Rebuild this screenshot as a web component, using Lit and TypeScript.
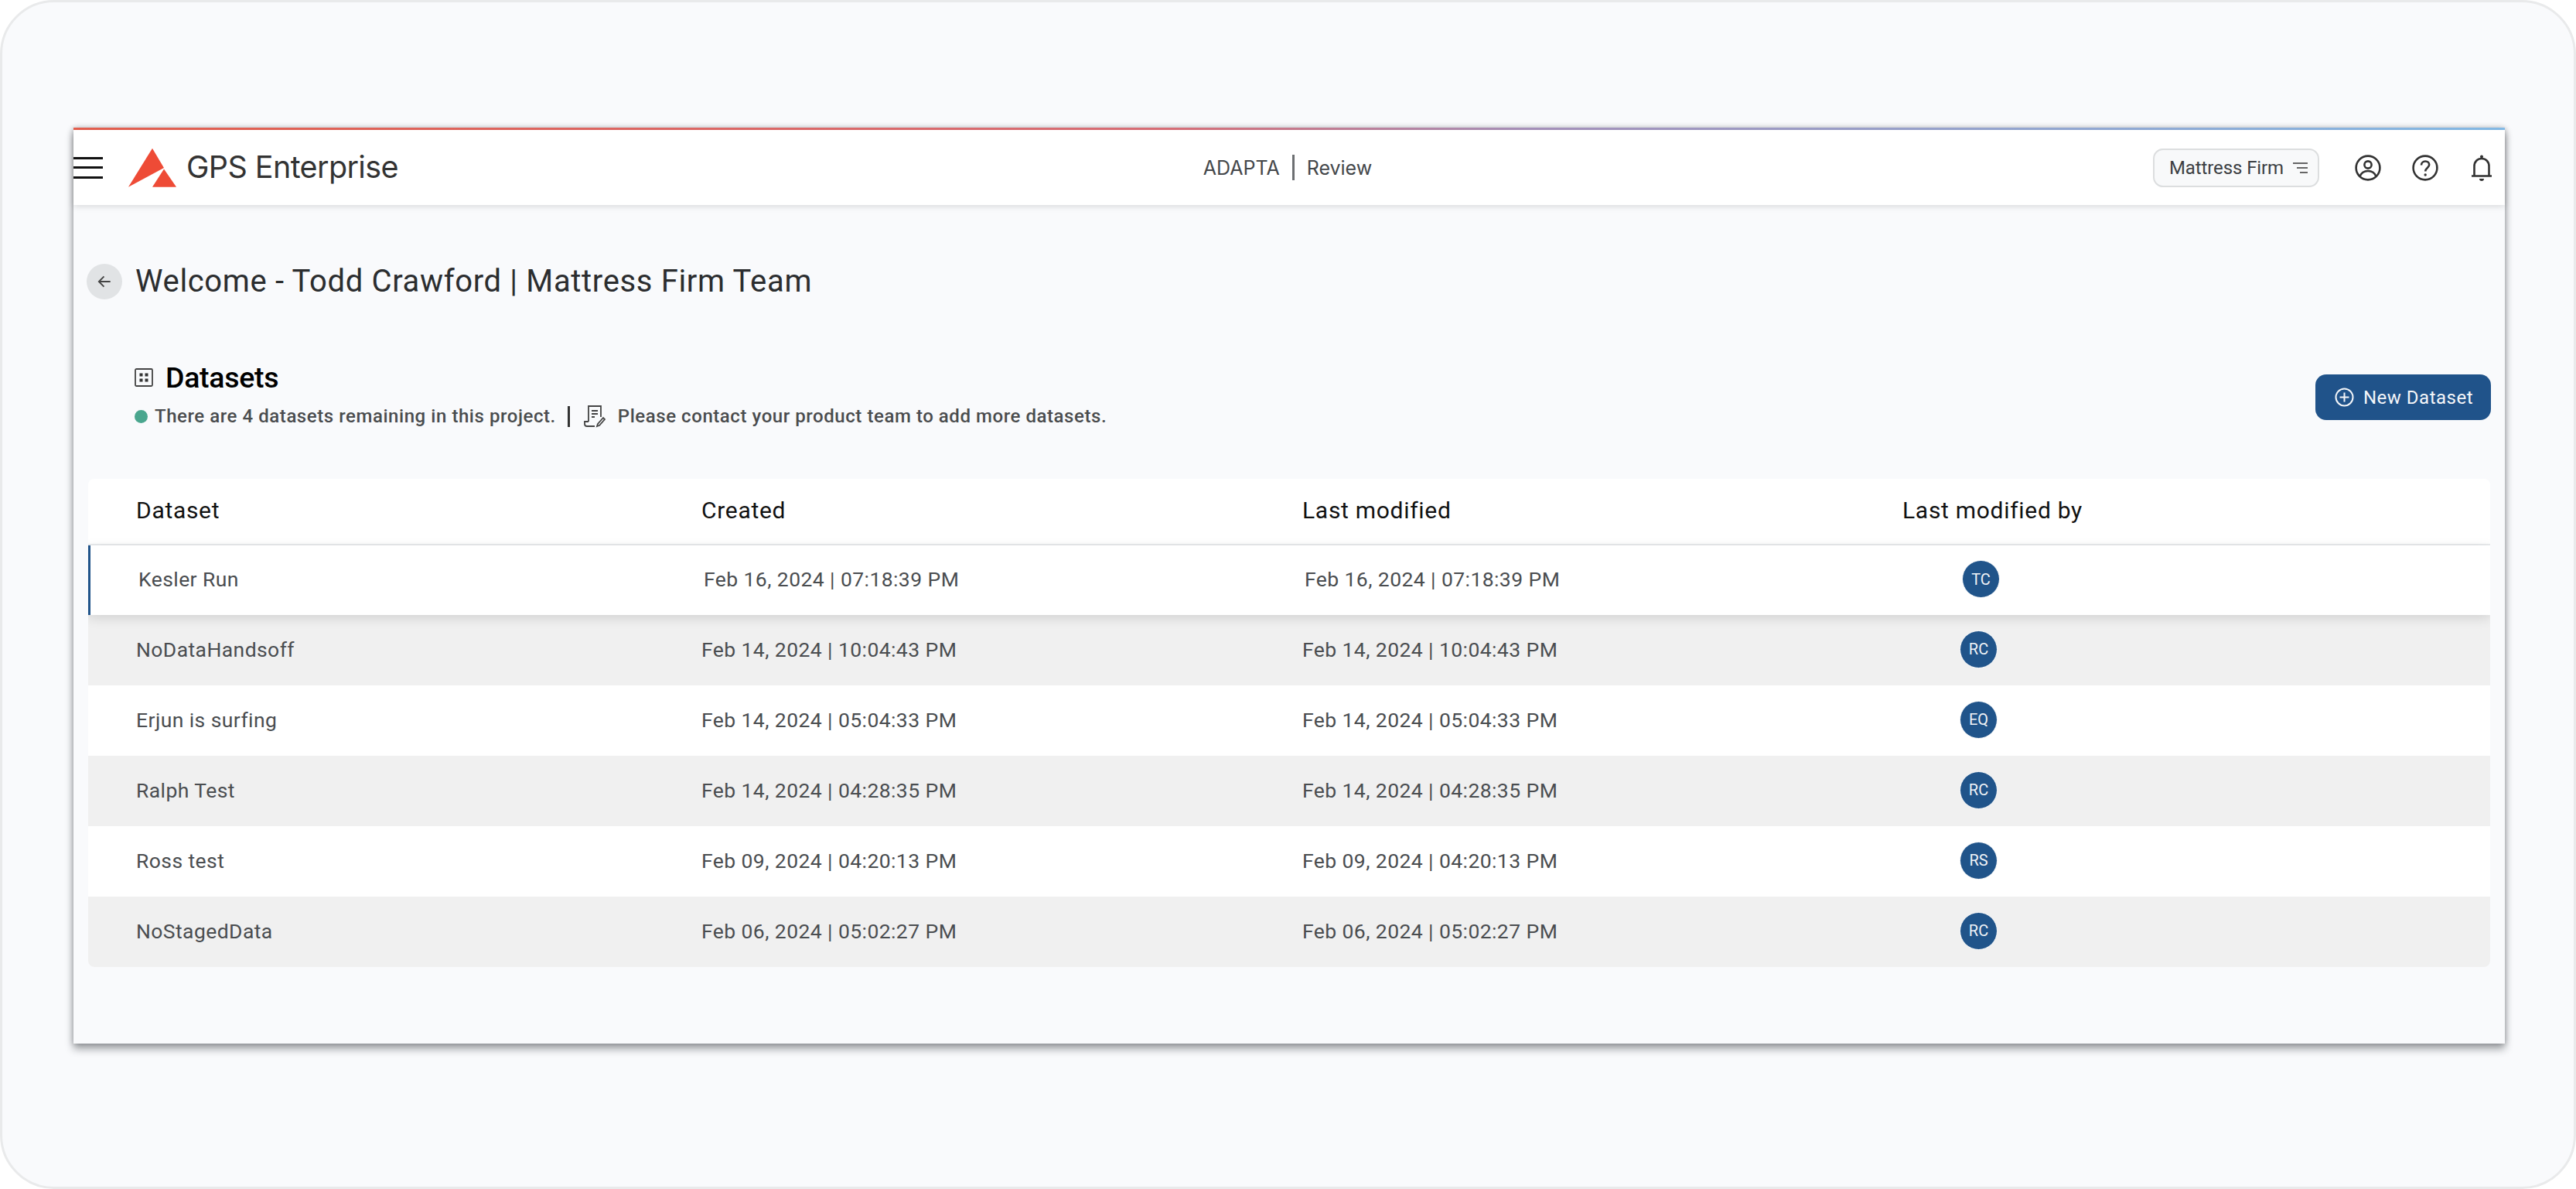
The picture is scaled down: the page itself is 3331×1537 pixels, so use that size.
import { LitElement, html, css } from "lit";
import { customElement } from "lit/decorators.js";

const rows = [
  { name: "Kesler Run", created: "Feb 16, 2024 | 07:18:39 PM", who: "TC" },
  { name: "NoDataHandsoff", created: "Feb 14, 2024 | 10:04:43 PM", who: "RC" },
  { name: "Erjun is surfing", created: "Feb 14, 2024 | 05:04:33 PM", who: "EQ" },
  { name: "Ralph Test", created: "Feb 14, 2024 | 04:28:35 PM", who: "RC" },
  { name: "Ross test", created: "Feb 09, 2024 | 04:20:13 PM", who: "RS" },
  { name: "NoStagedData", created: "Feb 06, 2024 | 05:02:27 PM", who: "RC" },
];

@customElement("app-root")
export class AppRoot extends LitElement {
  static styles = css`
    :host { display: block; font-family: Roboto, "Liberation Sans", sans-serif; background: #fff; }
    * { box-sizing: border-box; }
    .frame {
      height: 1537px; padding: 162px 89px 0 92px; background: #f9fafc;
      border: 3px solid #e9eaeb; border-radius: 70px; overflow: hidden;
    }
    .win {
      height: 1184px; background: #f9fafc; display: flex; flex-direction: column;
      box-shadow: 0 7px 10px rgba(30,34,40,.4), 2px 0 7px rgba(40,44,50,.14), -2px 0 7px rgba(40,44,50,.14);
    }
    .topline { height: 3px; flex: none; background: linear-gradient(90deg, #e8604f 0%, #dc6f78 45%, #a893bd 60%, #86bdea 100%); }
    .bar {
      height: 97px; flex: none; background: #fff; display: grid; grid-template-columns: 1fr 1fr 1fr; align-items: center;
      box-shadow: 0 2px 8px rgba(0,0,0,.13); position: relative;
    }
    .bar-l, .bar-r { display: flex; align-items: center; }
    .burger { width: 38px; height: 28px; display: flex; flex-direction: column; justify-content: space-between; margin-right: 33px; }
    .burger i { display: block; height: 3px; background: #111; }
    .logo { width: 63px; height: 52px; margin-right: 12px; flex: none; }
    .brand { font-family: Inter, sans-serif; font-size: 39.5px; letter-spacing: -0.6px; color: #333; line-height: 1; }
    .bar-c { display: flex; align-items: center; justify-content: center; font-family: Inter, sans-serif; font-size: 25px; color: #44474a; padding-right: 4px; }
    .bar-c i { display: block; width: 3px; height: 33px; background: #6c6f72; margin: 0 16px; }
    .bar-r { justify-content: flex-end; padding-right: 16px; }
    .pill {
      width: 215px; height: 50px; border: 2px solid #dcdedf; border-radius: 13px; background: #f8f9fa; display: flex; align-items: center;
      padding-left: 19px; font-size: 24px; letter-spacing: -.1px; color: #3c4043; margin-right: 46px;
    }
    .pill svg { width: 20px; height: 16px; margin-left: 12px; }
    .ic { width: 34px; height: 34px; color: #333; display: block; }
    .ic.a { margin-right: 40px; }
    .ic.b { margin-right: 42px; }
    .ic.c { width: 28px; }
    .main { flex: 1; padding: 76px 19px 0 17px; }
    .title { display: flex; align-items: center; height: 45px; }
    .back { width: 46px; height: 46px; border-radius: 50%; background: #e1e3e5; display: flex; align-items: center; justify-content: center; margin-right: 17px; }
    .back svg { width: 22px; height: 22px; }
    .title h1 { margin: 0; font-weight: 400; font-size: 40px; color: #2b2d2f; letter-spacing: .65px; }
    .head { display: flex; justify-content: space-between; align-items: flex-start; padding-left: 62px; margin-top: 84px; }
    .h2row { display: flex; align-items: center; height: 36px; }
    .h2row svg { width: 24px; height: 24px; margin-right: 16px; }
    .h2row h2 { margin: 0; font-weight: 500; font-size: 37.5px; color: #000; letter-spacing: -.3px; }
    .sub { display: flex; align-items: center; margin-top: 16px; font-size: 24px; font-weight: 500; color: #4a4c4e; letter-spacing: .56px; height: 32px; }
    .dot { width: 17px; height: 17px; border-radius: 50%; background: #4aa68e; margin-right: 9px; }
    .sep { width: 3px; height: 27px; background: #333; margin: 0 17px 0 15px; }
    .sub svg { width: 29px; height: 30px; margin-right: 16px; }
    .btn {
      width: 227px; height: 59px; background: #20538a; border-radius: 14px; color: #f4f6f9; display: flex; align-items: center;
      padding-left: 25px; font-size: 24px; letter-spacing: .5px; margin: 14px -1px 0 0;
    }
    .btn svg { width: 25px; height: 25px; margin-right: 12px; }
    .table { margin: 65px 0 0 2px; border-radius: 8px; overflow: hidden; background: #fff; }
    .row { display: grid; grid-template-columns: 731px 777px 776px 1fr; align-items: center; padding: 0 0 3px 62px; height: 91px; font-size: 26.5px; color: #4a4d50; letter-spacing: .42px; }
    .row.hd { height: 86px; color: #111; font-size: 30px; letter-spacing: .7px; border-bottom: 2px solid #e9ebed; }
    .row.sel { border-left: 3px solid #20548a; background: #fff; box-shadow: 0 4px 14px rgba(0,0,0,.13); position: relative; height: 90px; }
    .row.alt { background: #f0f0f0; }
    .av {
      width: 49px; height: 49px; border-radius: 50%; background: #20548a; border: 1px solid #fff; color: #f0f3f7; font-size: 20px;
      display: flex; align-items: center; justify-content: center; margin-left: 74px; letter-spacing: 0;
    }
  `;

  render() {
    return html`
      <div class="frame">
        <div class="win">
          <div class="topline"></div>
          <header class="bar">
            <div class="bar-l">
              <div class="burger"><i></i><i></i><i></i></div>
              <svg class="logo" viewBox="0 0 63 52">
                <path fill="#ee4b36" d="M31 .7 46 26 0 50.8 31 .7Z"/>
                <path fill="#ee4b36" d="M46 27.5 62 50.8H31L46 27.5Z"/>
              </svg>
              <span class="brand">GPS Enterprise</span>
            </div>
            <div class="bar-c"><span>ADAPTA</span><i></i><span>Review</span></div>
            <div class="bar-r">
              <div class="pill">Mattress Firm
                <svg viewBox="0 0 20 16" fill="none" stroke="#666" stroke-width="2"><path d="M0 2h19M5 8h14M9 14h10"/></svg>
              </div>
              <svg class="ic a" viewBox="0 0 34 34" fill="none" stroke="currentColor" stroke-width="2.6">
                <circle cx="17" cy="17" r="15.4"/><circle cx="17" cy="13" r="4.6"/><path d="M6.5 28c2-5 6-7 10.500-7s8.500 2 10.500 7"/>
              </svg>
              <svg class="ic b" viewBox="0 0 34 34" fill="none" stroke="currentColor" stroke-width="2.6">
                <circle cx="17" cy="17" r="15.400"/><path d="M12 13.500c0-3 2.300-5 5.200-5s5 2 5 4.600c0 3.800-5 4-5 8.400"/><circle cx="17.200" cy="26" r="1.700" fill="currentColor" stroke="none"/>
              </svg>
              <svg class="ic c" viewBox="0 0 28 34" fill="none" stroke="currentColor" stroke-width="2.6">
                <path d="M1 27.500h26M4.500 27V15c0-6 4-10 9.500-10s9.500 4 9.500 10v12"/>
                <circle cx="14" cy="2.500" r="2" fill="currentColor" stroke="none"/><path d="M11 31h6a3 3 0 0 1-6 0Z" fill="currentColor" stroke="none"/>
              </svg>
            </div>
          </header>
          <div class="main">
            <div class="title">
              <div class="back"><svg viewBox="0 0 20 20" fill="none" stroke="#444" stroke-width="1.700"><path d="M17 10H3.500M9.500 4 3.500 10l6 6"/></svg></div>
              <h1>Welcome - Todd Crawford | Mattress Firm Team</h1>
            </div>
            <div class="head">
              <div>
                <div class="h2row">
                  <svg viewBox="0 0 24 24" fill="none" stroke="#444" stroke-width="1.800"><rect x="1" y="1" width="22" height="22" rx="1.500"/><g fill="#333" stroke="none"><rect x="6.500" y="6.500" width="4" height="4"/><rect x="13.500" y="6.500" width="4" height="4"/><rect x="6.500" y="13.500" width="4" height="4"/><rect x="13.500" y="13.500" width="4" height="4"/></g></svg>
                  <h2>Datasets</h2>
                </div>
                <div class="sub">
                  <span class="dot"></span>There are 4 datasets remaining in this project.<span class="sep"></span>
                  <svg viewBox="0 0 29 30" fill="none" stroke="#444" stroke-width="1.800"><path d="M7 22V2h16v14M11 8h8M11 12h8M11 16h4M7 22H2v3c0 2 1 3 3 3h10"/><path d="M21 27l-3 1 1-3 7-8 2 2-7 8Z"/></svg>
                  Please contact your product team to add more datasets.
                </div>
              </div>
              <div class="btn">
                <svg viewBox="0 0 25 25" fill="none" stroke="#f4f6f9" stroke-width="2"><circle cx="12.500" cy="12.500" r="11"/><path d="M12.500 6.500v12M6.500 12.500h12"/></svg>
                New Dataset
              </div>
            </div>
            <div class="table">
              <div class="row hd"><span>Dataset</span><span>Created</span><span>Last modified</span><span>Last modified by</span></div>
              ${rows.map((r, i) => html`
                <div class="row data ${i === 0 ? "sel" : ""} ${i % 2 === 1 ? "alt" : ""}">
                  <span>${r.name}</span><span>${r.created}</span><span>${r.created}</span>
                  <span class="av">${r.who}</span>
                </div>`)}
            </div>
          </div>
        </div>
      </div>
    `;
  }
}
